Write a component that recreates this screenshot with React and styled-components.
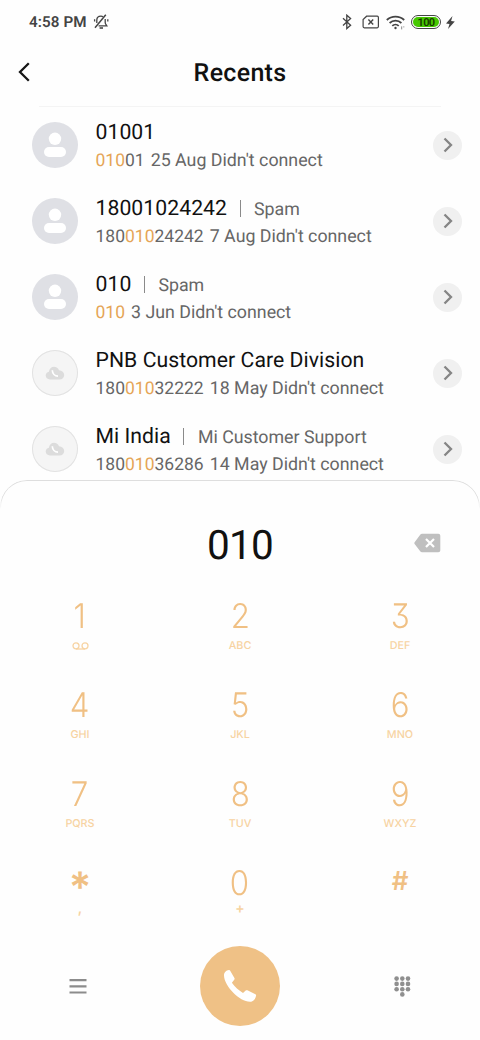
import React from "react";
import styled, { createGlobalStyle } from "styled-components";

const calls = [
  { name: "01001", tag: "", before: "", match: "010", after: "01", when: "25 Aug" },
  { name: "18001024242", tag: "Spam", before: "180", match: "010", after: "24242", when: "7 Aug" },
  { name: "010", tag: "Spam", before: "", match: "010", after: "", when: "3 Jun" },
  {
    name: "PNB Customer Care Division",
    tag: "",
    before: "180",
    match: "010",
    after: "32222",
    when: "18 May",
    business: true,
  },
  {
    name: "Mi India",
    tag: "Mi Customer Support",
    before: "180",
    match: "010",
    after: "36286",
    when: "14 May",
    business: true,
  },
];

const keys = [
  { digit: "1", letters: "voicemail" },
  { digit: "2", letters: "ABC" },
  { digit: "3", letters: "DEF" },
  { digit: "4", letters: "GHI" },
  { digit: "5", letters: "JKL" },
  { digit: "6", letters: "MNO" },
  { digit: "7", letters: "PQRS" },
  { digit: "8", letters: "TUV" },
  { digit: "9", letters: "WXYZ" },
  { digit: "*", letters: "," },
  { digit: "0", letters: "+" },
  { digit: "#", letters: "" },
];

const BellOff = () => (
  <svg width="17" height="16" viewBox="0 0 17 16" fill="none" stroke="#444" strokeWidth="1.3">
    <path d="M2 13.800L12.800.8" strokeWidth="1.5" />
    <path d="M3.800 9V6.200C3.800 3.600 5.800 2.200 8 2.200c.8 0 1.400.1 2 .5M12.200 5v3.600c0 1.400.7 1.900 1.600 3.300H5.600" />
    <path d="M1.600 5.200v2.200M14.800 5.200v2.200" />
    <path d="M6.600 14h3.400" strokeWidth="1.6" />
  </svg>
);

const Bluetooth = () => (
  <svg width="10" height="16" viewBox="0 0 10 16" fill="none" stroke="#444" strokeWidth="1.3">
    <path d="M1 4.3l7.6 7L4.8 14.6V1.2l3.8 3.4L1 11.5" />
  </svg>
);

const NoSim = () => (
  <svg width="18" height="14" viewBox="0 0 18 14" fill="none" stroke="#444" strokeWidth="1.2">
    <path d="M4.6 1.2h10.6c.8 0 1.2.5 1.2 1.2v9.2c0 .7-.4 1.2-1.2 1.2H2.3c-.8 0-1.2-.5-1.2-1.2V4.5z" />
    <path d="M6.4 4.500l4.800 5M11.200 4.500l-4.800 5" strokeWidth="1.4" />
  </svg>
);

const Wifi = () => (
  <svg width="19" height="15" viewBox="0 0 19 15" fill="none" stroke="#444" strokeWidth="1.8">
    <path d="M.8 5C5.6.4 13.4.4 18.2 5M3.6 8c3.3-3.1 8.5-3.1 11.8 0M6.3 10.8c1.8-1.7 4.6-1.7 6.4 0" />
    <circle cx="9.5" cy="13" r="1.2" fill="#444" stroke="none" />
    <path d="M15.7 11.4v3M17.8 11.4v1" stroke="#888" strokeWidth="1" />
  </svg>
);

const Bolt = () => (
  <svg width="9" height="13" viewBox="0 0 9 13" fill="#444">
    <path d="M6.500 0L0 7.400l3.500.5L2 13l6.800-7.500-3.700-.5z" />
  </svg>
);

const BackArrow = () => (
  <svg width="12" height="20" viewBox="0 0 12 20" fill="none" stroke="#161616" strokeWidth="2.3">
    <path d="M10.800 1.200L2 10l8.800 8.800" />
  </svg>
);

const Person = () => (
  <svg width="46" height="46" viewBox="0 0 46 46" fill="#fff">
    <circle cx="23" cy="16.800" r="6.200" />
    <rect x="12" y="25" width="22" height="10" rx="5" />
  </svg>
);

const CloudPhone = () => (
  <svg width="20" height="14" viewBox="0 0 20 14">
    <path
      fill="#dcdcdc"
      d="M5 13.500C2.400 13.500.7 11.800.7 9.600c0-2 1.300-3.500 3.200-3.900C4.200 2.800 6.300.7 9 .7c2.300 0 4.200 1.300 5 3.500 3.100.2 5.200 2.100 5.200 4.800 0 2.700-2 4.500-4.700 4.500z"
    />
    <path fill="none" stroke="#fff" strokeWidth="1.700" d="M7.300 4.200c.1 3.300 2.500 5.700 5.700 5.900" />
  </svg>
);

const Chevron = () => (
  <svg width="10" height="16" viewBox="0 0 10 16" fill="none" stroke="#858585" strokeWidth="2.300">
    <path d="M1.500 1.500L8 8l-6.500 6.500" />
  </svg>
);

const Backspace = () => (
  <svg width="27" height="20" viewBox="0 0 27 20">
    <path
      fill="#bfbfbf"
      d="M8 .7h16.300c1.200 0 2 .8 2 2v14.600c0 1.200-.8 2-2 2H8c-.7 0-1.200-.2-1.600-.7L.8 11.300c-.6-.8-.6-1.500 0-2.300l5.600-7.600C6.800.9 7.300.7 8 .7z"
    />
    <path stroke="#fff" strokeWidth="2.200" d="M12 6l8 8M20 6l-8 8" />
  </svg>
);

const Voicemail = () => (
  <svg width="17" height="8" viewBox="0 0 17 8" fill="none" stroke="#f7d3a2" strokeWidth="1.300">
    <circle cx="4" cy="3.800" r="3" />
    <circle cx="13" cy="3.800" r="3" />
    <path d="M4 7h9" />
  </svg>
);

const Handset = () => (
  <svg width="34" height="34" viewBox="0 0 34 34" fill="#fff">
    <path d="M1 6.500C.9 3.600 3.200 1.500 5.900 1.100c.6-.1 1 .1 1.300.7l4.200 7.300c.4.700.3 1.100-.2 1.700l-2.300 3c3 4.200 6.700 7.500 11.100 10.100l2.700-2.300c.6-.5 1-.6 1.700-.3l8 3.900c.6.300.8.7.7 1.300-.6 3.300-2.600 6.300-6 6.300C16.500 32.800 1.200 17 1 6.500z" />
  </svg>
);

const Menu = () => (
  <svg width="18" height="16" viewBox="0 0 18 16" stroke="#8c8c8c" strokeWidth="2.200">
    <path d="M.5 2.200h17M.5 8.400h17M.5 14.500h17" />
  </svg>
);

const Keypad = () => (
  <svg width="17" height="21" viewBox="0 0 17 21" fill="#8f8f8f">
    {[2.6, 7.9, 13.2].map((y) =>
      [2.6, 8.3, 14].map((x) => <circle key={`${x}-${y}`} cx={x} cy={y} r="2.300" />)
    )}
    <circle cx="8.300" cy="18.400" r="2.300" />
  </svg>
);

const App = () => {
  return (
    <Screen>
      <GlobalStyle />
      <StatusBar>
        <Clock>4:58 PM</Clock>
        <BellOff />
        <StatusIcons>
          <Bluetooth />
          <NoSim />
          <Wifi />
          <Battery>
            <span>100</span>
          </Battery>
          <Bolt />
        </StatusIcons>
      </StatusBar>
      <Header>
        <BackButton>
          <BackArrow />
        </BackButton>
        <h1>Recents</h1>
      </Header>
      <CallList>
        {calls.map((call) => (
          <CallRow key={call.name}>
            <Avatar $business={call.business}>
              {call.business ? <CloudPhone /> : <Person />}
            </Avatar>
            <CallText>
              <CallTitle>
                <strong>{call.name}</strong>
                {call.tag && <Separator />}
                {call.tag && <small>{call.tag}</small>}
              </CallTitle>
              <CallDetail>
                <span>
                  {call.before}
                  <em>{call.match}</em>
                  {call.after}
                </span>
                <CallDate>{call.when} Didn't connect</CallDate>
              </CallDetail>
            </CallText>
            <MoreButton>
              <Chevron />
            </MoreButton>
          </CallRow>
        ))}
      </CallList>
      <Dialer>
        <NumberRow>
          <NumberText>010</NumberText>
          <DeleteButton>
            <Backspace />
          </DeleteButton>
        </NumberRow>
        <KeyGrid>
          {keys.map((key) => (
            <Key key={key.digit}>
              <Digit $symbol={key.digit}>{key.digit}</Digit>
              <Letters $mark={key.letters.length === 1}>
                {key.letters === "voicemail" ? <Voicemail /> : key.letters}
              </Letters>
            </Key>
          ))}
        </KeyGrid>
        <ActionBar>
          <ActionButton>
            <Menu />
          </ActionButton>
          <CallButton>
            <Handset />
          </CallButton>
          <ActionButton>
            <Keypad />
          </ActionButton>
        </ActionBar>
      </Dialer>
    </Screen>
  );
};

const GlobalStyle = createGlobalStyle`
  * {
    box-sizing: border-box;
  }
  body {
    margin: 0;
    background: #fefefe;
    font-family: Roboto, "Liberation Sans", sans-serif;
    text-rendering: geometricPrecision;
  }
  svg {
    display: block;
    flex: none;
  }
`;

const Screen = styled.div`
  width: 480px;
  height: 1040px;
  display: flex;
  flex-direction: column;
  overflow: hidden;
  background: #fefefe;
`;

const IconButton = styled.button`
  display: flex;
  align-items: center;
  justify-content: center;
  border: none;
  padding: 0;
  background: none;
`;

const StatusBar = styled.div`
  height: 44px;
  flex: none;
  display: flex;
  align-items: center;
  gap: 6px;
  padding: 0 25px 0 29px;
`;

const Clock = styled.span`
  font-size: 15.2px;
  font-weight: 600;
  letter-spacing: 0.1px;
  color: #444;
`;

const StatusIcons = styled.div`
  flex: 1;
  display: flex;
  align-items: center;
  justify-content: flex-end;
  svg:first-child {
    margin-right: 10px;
  }
  svg:nth-child(2) {
    margin-right: 6px;
  }
  svg:nth-child(3) {
    margin-right: 6px;
  }
  svg:last-child {
    margin-left: 5px;
  }
`;

const Battery = styled.div`
  width: 30px;
  height: 14px;
  padding: 1px;
  border: 1px solid #444;
  border-radius: 7px;
  span {
    display: block;
    height: 10px;
    border-radius: 5px;
    background: #46c800;
    color: #173a00;
    font-size: 11px;
    font-weight: 600;
    letter-spacing: -0.7px;
    line-height: 11px;
    text-align: center;
  }
`;

const Header = styled.header`
  height: 55px;
  flex: none;
  display: flex;
  align-items: center;
  padding: 0 17px;
  h1 {
    flex: 1;
    margin: 3px 14px 0 0;
    font-size: 25px;
    font-weight: 500;
    letter-spacing: 0.3px;
    text-align: center;
    color: #111;
  }
`;

const BackButton = styled(IconButton)`
  width: 14px;
  height: 24px;
`;

const CallList = styled.div`
  height: 381px;
  flex: none;
  display: flex;
  flex-direction: column;
  overflow: hidden;
  &:before {
    content: "";
    flex: none;
    height: 1px;
    margin: 7px 39px 0;
    background: #f4f4f4;
  }
`;

const CallRow = styled.div`
  height: 76px;
  flex: none;
  display: flex;
  align-items: center;
  padding: 0 18px 0 32px;
`;

const Avatar = styled.div`
  width: 46px;
  height: 46px;
  flex: none;
  display: flex;
  align-items: center;
  justify-content: center;
  border-radius: 100%;
  background: ${(props) => (props.$business ? "#f5f5f5" : "#dfe0e5")};
  box-shadow: ${(props) => (props.$business ? "inset 0 0 0 1px #e2e2e2" : "none")};
`;

const CallText = styled.div`
  flex: 1;
  padding: 2px 0 0 17.5px;
`;

const CallTitle = styled.div`
  display: flex;
  align-items: center;
  height: 28px;
  strong {
    font-size: 21.2px;
    font-weight: 400;
    letter-spacing: 0.05px;
    color: #111;
  }
  small {
    font-size: 17.8px;
    color: #666;
    padding-top: 1px;
  }
`;

const Separator = styled.span`
  width: 1px;
  height: 17px;
  margin: 0 13.5px 0 12.5px;
  background: #8a8a8a;
`;

const CallDetail = styled.div`
  display: flex;
  gap: 6px;
  height: 27px;
  line-height: 28px;
  font-size: 17.5px;
  color: #666;
  em {
    font-style: normal;
    color: #e5a556;
  }
`;

const CallDate = styled.span`
  font-size: 17.8px;
`;

const MoreButton = styled(IconButton)`
  width: 29px;
  height: 29px;
  flex: none;
  border-radius: 100%;
  background: #f0f0f0;
`;

const Dialer = styled.div`
  height: 560px;
  flex: none;
  display: flex;
  flex-direction: column;
  position: relative;
  border-radius: 27px 27px 0 0;
  background: #fefefe;
  &:before {
    content: "";
    position: absolute;
    top: 0;
    left: 0;
    right: 0;
    height: 28px;
    border: 1px solid #dedede;
    border-bottom: none;
    border-radius: 27px 27px 0 0;
    mask-image: linear-gradient(#000 60%, transparent);
  }
`;

const NumberRow = styled.div`
  height: 104px;
  flex: none;
  display: grid;
  grid-template-columns: 1fr 1fr 1fr;
  align-items: center;
  padding-top: 22px;
`;

const NumberText = styled.div`
  grid-column: 2;
  padding-top: 3px;
  font-size: 40.5px;
  letter-spacing: -0.8px;
  text-align: center;
  color: #111;
`;

const DeleteButton = styled(IconButton)`
  justify-self: end;
  margin-right: 39px;
`;

const KeyGrid = styled.div`
  flex: none;
  display: grid;
  grid-template-columns: repeat(3, 1fr);
  grid-auto-rows: 89px;
`;

const Key = styled.div`
  display: flex;
  flex-direction: column;
  align-items: center;
  padding-top: 12px;
  font-family: Inter, Roboto, sans-serif;
`;

const symbolSizes = { "*": "42px", "#": "26px" };
const symbolLines = { "*": "50px", "#": "38px" };

const Digit = styled.span`
  height: 42px;
  line-height: ${(props) => symbolLines[props.$symbol] || "42px"};
  font-size: ${(props) => symbolSizes[props.$symbol] || "34px"};
  font-weight: ${(props) => (symbolSizes[props.$symbol] ? 600 : 350)};
  font-feature-settings: "cv09";
  color: #f0c084;
  transform: ${(props) => (symbolSizes[props.$symbol] ? "none" : "scaleX(0.92)")};
`;

const Letters = styled.span`
  height: 16px;
  display: flex;
  align-items: center;
  font-size: ${(props) => (props.$mark ? "14px" : "10.8px")};
  line-height: ${(props) => (props.$mark ? "10px" : "16px")};
  margin-top: ${(props) => (props.$mark ? "-4px" : "0")};
  font-weight: ${(props) => (props.$mark ? 600 : 450)};
  color: #f7d3a2;
`;

const ActionBar = styled.div`
  flex: 1;
  display: grid;
  grid-template-columns: 156px 1fr 156px;
  justify-items: center;
  align-items: start;
  padding-top: 6px;
`;

const ActionButton = styled(IconButton)`
  width: 48px;
  height: 80px;
`;

const CallButton = styled(IconButton)`
  width: 80px;
  height: 80px;
  border-radius: 100%;
  background: #efc186;
`;

export default App;
